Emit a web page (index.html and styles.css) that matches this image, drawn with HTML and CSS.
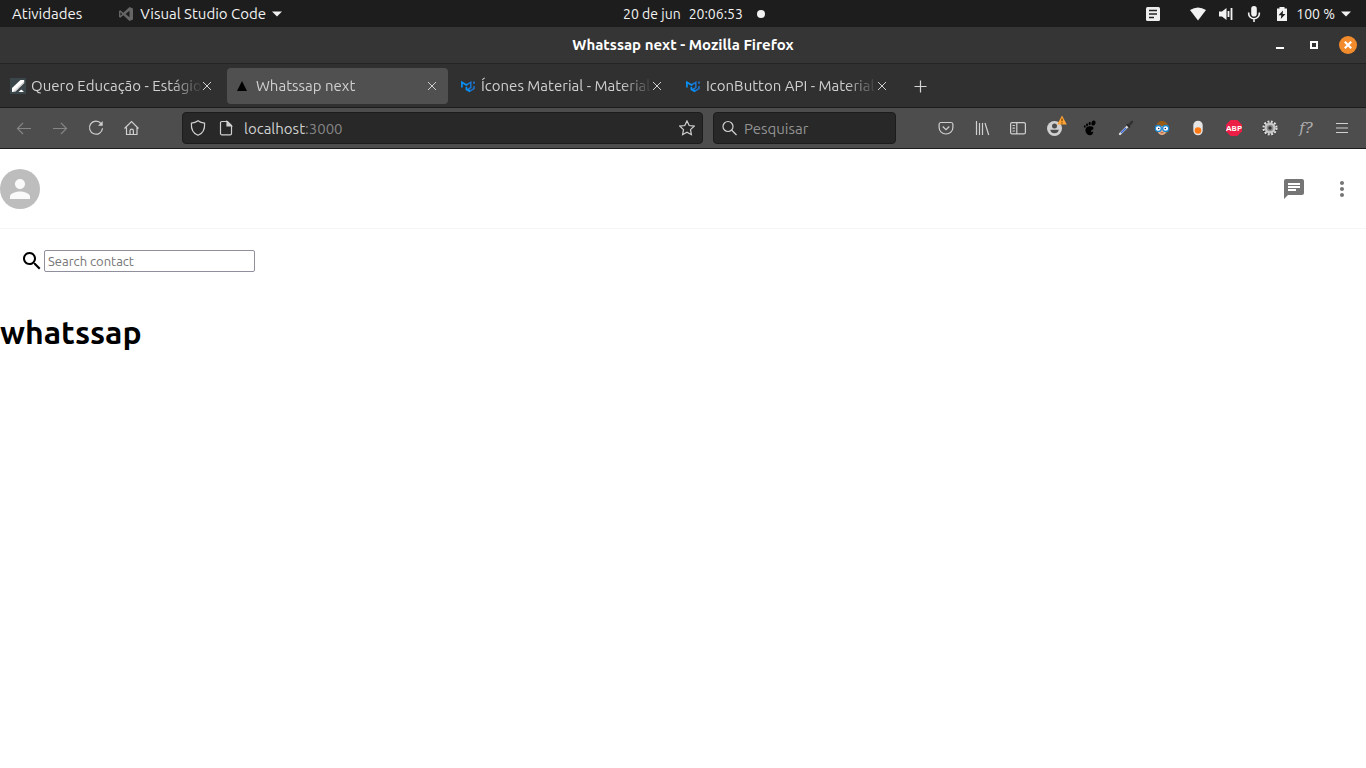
FILE: index.html
```html
<!DOCTYPE html>
<html lang="pt-BR">
<head>
<meta charset="utf-8">
<meta name="viewport" content="width=device-width, initial-scale=1">
<title>Whatssap next</title>
<link rel="stylesheet" href="styles.css">
</head>
<body>
<svg class="defs" aria-hidden="true">
  <symbol id="mui" viewBox="0 0 16 16">
    <path d="M7.800 6.100l3-1.700v5.200L7.800 11.300l2.400 1.500 3.800-2.200V8" fill="none" stroke="#1976d2" stroke-width="1.500"/>
    <path d="M1.900 9.500V4.300l4.500 2.600 1.400-.8M6.400 8.800v2.600l3.800 2" fill="none" stroke="#0a90f5" stroke-width="1.700"/>
    <path d="M13.200 3.500h1.700v2.200h-1.700z" fill="#1976d2"/>
  </symbol>
  <symbol id="cross" viewBox="0 0 16 16">
    <path d="M4 4l8 8M12 4l-8 8" fill="none" stroke="currentColor" stroke-width="1"/>
  </symbol>
</svg>

<header class="panel">
  <div class="panel-left">
    <button type="button" class="panel-item">Atividades</button>
    <button type="button" class="panel-item app-menu">
      <svg width="16" height="16" viewBox="0 0 16 16"><path d="M11.500 1L15 2.500v11L11.500 15 5.300 9.300 2.300 11.700 1 11V5l1.300-.7 3 2.400z" fill="#666"/><path d="M11.500 4.800L7.500 8l4 3.200zM2.400 6.300v3.400L4.200 8z" fill="#1d1d1d"/></svg>
      <span>Visual Studio Code</span>
      <svg width="10" height="6" viewBox="0 0 10 6"><path d="M0 .5h10L5 5.500z" fill="#f2f2f2"/></svg>
    </button>
  </div>
  <button type="button" class="panel-item clock"><span>20 de jun</span><span>20:06:53</span></button>
  <div class="panel-right">
    <span class="dot"></span>
    <div class="tray">
      <svg class="notes" width="16" height="16" viewBox="0 0 16 16"><rect x="1" y="1" width="14" height="14" rx="1.500" fill="#eee"/><path d="M4 4.500h8M4 8h8M4 11.500h5" stroke="#222" stroke-width="1.500"/></svg>
      <button type="button" class="panel-item status" aria-label="Sistema">
        <svg width="16" height="16" viewBox="0 0 16 16"><path d="M0 4Q8-1 16 4L8 14.500z" fill="#f2f2f2"/></svg>
        <svg width="16" height="16" viewBox="0 0 16 16"><path d="M1 5.500h3L8.500 2v12L4 10.500H1z" fill="#f2f2f2"/><path d="M10.500 5v6M13.500 2v12" stroke="#f2f2f2" stroke-width="1.800"/></svg>
        <svg width="16" height="16" viewBox="0 0 16 16"><rect x="5.200" y="0" width="5.600" height="10.500" rx="2.800" fill="#f2f2f2"/><path d="M2.700 6.500v1.200a5.300 5 0 0 0 10.600 0V6.500M8 13v3" fill="none" stroke="#f2f2f2" stroke-width="1.600"/></svg>
        <svg width="16" height="16" viewBox="0 0 16 16"><path d="M5.500 1h5v1.500H13V15H3V2.500h2.500z" fill="#f2f2f2"/><path d="M9 4.500L4.500 9.300h2.800L6.800 13l4.700-5H8.700z" fill="#1d1d1d"/></svg>
        <span>100 %</span>
        <svg width="10" height="6" viewBox="0 0 10 6"><path d="M0 .5h10L5 5.500z" fill="#f2f2f2"/></svg>
      </button>
    </div>
  </div>
</header>

<div class="titlebar">
  <div class="title">Whatssap next - Mozilla Firefox</div>
  <div class="window-controls">
    <button type="button" aria-label="Minimizar"><svg width="18" height="18" viewBox="0 0 18 18"><path d="M5 12h8" stroke="#fff" stroke-width="2"/></svg></button>
    <button type="button" aria-label="Maximizar"><svg width="18" height="18" viewBox="0 0 18 18"><rect x="6" y="6" width="6" height="6" fill="none" stroke="#fff" stroke-width="2"/></svg></button>
    <button type="button" aria-label="Fechar"><svg width="18" height="18" viewBox="0 0 18 18"><circle cx="9" cy="9" r="9" fill="#f28b2b"/><path d="M5.800 5.800l6.400 6.400M12.200 5.800l-6.400 6.400" stroke="#fff" stroke-width="2.200"/></svg></button>
  </div>
</div>

<nav class="tabs" aria-label="Abas">
  <div class="tab">
    <svg class="favicon" width="16" height="16" viewBox="0 0 16 16"><path d="M0 0h16v16H0z" fill="#3c474c"/><path d="M2 10L10.500 2h3.700v3L5.500 13.500 2 14z" fill="#fff"/><path d="M4 13.300L14.200 4" stroke="#bbb" stroke-width=".8"/><path d="M8.500 14l2.800-2.500L14 14z" fill="#fff"/></svg>
    <a class="tab-title" href="#quero">Quero Educação - Estágio</a>
    <button type="button" class="tab-close" aria-label="Fechar aba"><svg width="16" height="16"><use href="#cross"/></svg></button>
  </div>
  <div class="tab active">
    <svg class="favicon" width="16" height="16" viewBox="0 0 16 16"><path d="M2 13L7 3l5 10z" fill="#000"/></svg>
    <a class="tab-title" href="#whatssap">Whatssap next</a>
    <button type="button" class="tab-close" aria-label="Fechar aba"><svg width="16" height="16"><use href="#cross"/></svg></button>
  </div>
  <div class="tab">
    <svg class="favicon" width="16" height="16"><use href="#mui"/></svg>
    <a class="tab-title" href="#icones">Ícones Material - Material</a>
    <button type="button" class="tab-close" aria-label="Fechar aba"><svg width="16" height="16"><use href="#cross"/></svg></button>
  </div>
  <div class="tab">
    <svg class="favicon" width="16" height="16"><use href="#mui"/></svg>
    <a class="tab-title" href="#iconbutton">IconButton API - Material</a>
    <button type="button" class="tab-close" aria-label="Fechar aba"><svg width="16" height="16"><use href="#cross"/></svg></button>
  </div>
  <button type="button" class="tool new-tab" aria-label="Nova aba"><svg width="16" height="16" viewBox="0 0 16 16"><path d="M8.500 2.500v12M2.500 8.500h12" stroke="#d4d4d4" stroke-width="1.200"/></svg></button>
</nav>

<div class="toolbar">
  <div class="tools">
    <button type="button" class="tool" aria-label="Voltar" disabled><svg class="line" width="16" height="16" viewBox="0 0 16 16"><path d="M15 8.500H1.500M7 3L1.500 8.500 7 14"/></svg></button>
    <button type="button" class="tool" aria-label="Avançar" disabled><svg class="line" width="16" height="16" viewBox="0 0 16 16"><path d="M1 8.500h13.500M9 3l5.500 5.500L9 14"/></svg></button>
    <button type="button" class="tool" aria-label="Recarregar"><svg class="line" width="16" height="16" viewBox="0 0 16 16"><path d="M13 3.500a6.500 6.500 0 1 0 1.500 4.700"/><path d="M14.700 1v4.700H10z" fill="currentColor" stroke="none"/></svg></button>
    <button type="button" class="tool" aria-label="Início"><svg class="line" width="16" height="16" viewBox="0 0 16 16"><path d="M.5 8.500L7.500 1.500l7 7M2.500 7.500v7h10.500v-7M6 14.500v-3.700a1.700 1.700 0 0 1 3.400 0v3.700"/></svg></button>
  </div>
  <div class="field url">
    <svg class="line" width="16" height="16" viewBox="0 0 16 16"><path d="M8 .8c2 1.500 4.300 2.200 6.600 2.400C15 9 12.500 13.500 8 15.300 3.500 13.500 1 9 1.400 3.200 3.700 3 6 2.300 8 .8z"/></svg>
    <svg class="line page-icon" width="16" height="16" viewBox="0 0 16 16"><path d="M3.800 1.500H9.500L13.500 5.500v8a1.300 1.300 0 0 1-1.300 1.300H3.800a1.300 1.300 0 0 1-1.300-1.300v-10.700a1.300 1.300 0 0 1 1.300-1.300z"/><path d="M9 1.500V6h4.500z" fill="currentColor"/></svg>
    <a class="address" href="#localhost">localhost<span>:3000</span></a>
    <button type="button" class="star" aria-label="Favoritar"><svg class="line" width="16" height="16" viewBox="0 0 16 16"><path d="M8 .9l2.200 4.600 5 .6-3.700 3.500.9 5.100L8 12.200l-4.400 2.500.9-5.100L.8 6.100l5-.6z"/></svg></button>
  </div>
  <div class="field find">
    <svg class="line" width="16" height="16" viewBox="0 0 16 16"><circle cx="7" cy="6.500" r="5"/><path d="M10.500 10l5 5"/></svg>
    <input type="text" aria-label="Pesquisar" placeholder="Pesquisar">
  </div>
  <div class="tools extensions">
    <button type="button" class="tool" aria-label="Pocket"><svg class="line" width="16" height="16" viewBox="0 0 16 16"><path d="M2.800 2.500h10.400a1.800 1.800 0 0 1 1.700 1.800V7.500a6.900 6.500 0 0 1-13.800 0V4.300a1.800 1.800 0 0 1 1.700-1.800z"/><path d="M4.700 6.500L8 9.700l3.300-3.200"/></svg></button>
    <button type="button" class="tool" aria-label="Biblioteca"><svg class="line" width="16" height="16" viewBox="0 0 16 16"><path d="M2.500 1v14M5.500 3v12M8.500 3v12M11 3l3.700 12"/></svg></button>
    <button type="button" class="tool" aria-label="Painel lateral"><svg class="line" width="16" height="16" viewBox="0 0 16 16"><rect x=".6" y="2.600" width="14.800" height="11.300" rx="1.500"/><path d="M6.800 2.600v11.300M2.500 5.500h2.400M2.500 8.200h2.400M2.500 11h2.400"/></svg></button>
    <button type="button" class="tool account" aria-label="Conta"><svg width="16" height="16" viewBox="0 0 16 16"><circle cx="8.500" cy="8.500" r="7.500" fill="#d0d0d0"/><circle cx="8.500" cy="6" r="2.500" fill="#4d4d4d"/><path d="M4.200 9.700h8.600c-.5 2.300-2 3.600-4.300 3.600s-3.800-1.300-4.300-3.600z" fill="#4d4d4d"/></svg><svg class="warning" width="10" height="10" viewBox="0 0 10 10"><path d="M5 .5L9.800 9.500H.2z" fill="#ffa436"/><path d="M5 3.500v2.800M5 7.300v1.200" stroke="#704000" stroke-width="1.200"/></svg></button>
    <button type="button" class="tool" aria-label="GNOME"><svg width="16" height="16" viewBox="0 0 16 16"><ellipse cx="11.500" cy="3" rx="2" ry="2.600" transform="rotate(15 11.500 3)"/><ellipse cx="7.700" cy="3.500" rx="1.100" ry="1.700"/><ellipse cx="5" cy="4.700" rx="1" ry="1.500"/><ellipse cx="2.800" cy="6.500" rx=".9" ry="1.200"/><path d="M7.500 6.300c3-.5 4.600 1 3.800 2.600-.8 1.500-2.700 1.300-2.500 2.400.1.800 1.700.7 2.500.3-.1 2.200-1.500 3.900-3.600 3.700C4.500 15 3 11.500 3.600 9c.4-1.600 2-2.500 3.900-2.700z"/></svg></button>
    <button type="button" class="tool" aria-label="Conta-gotas"><svg width="16" height="16" viewBox="0 0 16 16"><path d="M2 14L9.500 6.500" stroke="#ddd" stroke-width="2.400" stroke-linecap="round"/><path d="M3 13L8 8" stroke="#3968db" stroke-width="1.500"/><path d="M10.500 5.500L14 2" stroke="#333" stroke-width="2.600" stroke-linecap="round"/><path d="M8.700 4.300l3.200 3.200" stroke="#292929" stroke-width="1.500"/></svg></button>
    <button type="button" class="tool" aria-label="Extensão de avatar"><svg width="16" height="16" viewBox="0 0 16 16"><path d="M2 6C3 2.500 5 1 8 1s6 2 6 6l-.5 6-2 .5-8-1z" fill="#9a5b14"/><path d="M3.500 6h9c1 5-1 9-4.500 9s-5.500-4-4.500-9z" fill="#f0b58a"/><circle cx="4.300" cy="8.500" r="3" fill="#fff" stroke="#1685d4" stroke-width="1.300"/><circle cx="11.700" cy="8.500" r="3" fill="#fff" stroke="#1685d4" stroke-width="1.300"/><circle cx="4.700" cy="8.500" r=".8" fill="#125"/><circle cx="11.300" cy="8.500" r=".8" fill="#125"/><path d="M6.500 12.800h3" stroke="#a84f35"/></svg></button>
    <button type="button" class="tool" aria-label="Alternar"><svg width="16" height="16" viewBox="0 0 16 16"><rect x="3.300" y=".7" width="9.400" height="14.600" rx="4.700" fill="#e4e4e4"/><circle cx="8" cy="10.500" r="3.300" fill="#ff7a14"/></svg></button>
    <button type="button" class="tool" aria-label="Adblock Plus"><svg width="16" height="16" viewBox="0 0 16 16"><path d="M4.700 0h6.600L16 4.700v6.600L11.300 16H4.700L0 11.300V4.700z" fill="#ed1e45"/><text class="abp" x="8" y="11" text-anchor="middle">ABP</text></svg></button>
    <button type="button" class="tool" aria-label="Ajustes"><svg width="16" height="16" viewBox="0 0 16 16"><circle cx="8" cy="8.500" r="6.600" fill="none" stroke="#222" stroke-width="2.200" stroke-dasharray="2 1.450"/><circle cx="8" cy="8" r="6.500" fill="none" stroke="#ddd" stroke-width="2.200" stroke-dasharray="2 1.400"/><circle cx="8" cy="8" r="4.400" fill="#8b8b8b" stroke="#c8c8c8" stroke-width="2.200"/><circle cx="8" cy="8" r="1.700" fill="#333"/></svg></button>
    <button type="button" class="tool whatfont" aria-label="WhatFont">f?</button>
    <button type="button" class="tool" aria-label="Menu"><svg class="line" width="16" height="16" viewBox="0 0 16 16"><path d="M2 3.500h12M2 8h12M2 12.500h12"/></svg></button>
  </div>
</div>

<main class="page">
  <div class="chat-header">
    <button type="button" class="avatar" aria-label="Perfil"><svg width="30" height="30" viewBox="0 0 24 24"><path d="M12 12c2.210 0 4-1.790 4-4s-1.790-4-4-4-4 1.790-4 4 1.790 4 4 4zm0 2c-2.670 0-8 1.340-8 4v2h16v-2c0-2.660-5.330-4-8-4z" fill="#fafafa"/></svg></button>
    <div class="chat-actions">
      <button type="button" aria-label="Conversas"><svg width="24" height="24" viewBox="0 0 24 24"><path d="M20 2H4c-1.100 0-1.990.9-1.990 2L2 22l4-4h14c1.100 0 2-.9 2-2V4c0-1.100-.9-2-2-2zM6 9h12v2H6V9zm8 5H6v-2h8v2zm4-6H6V6h12v2z" fill="#757575"/></svg></button>
      <button type="button" aria-label="Mais"><svg width="24" height="24" viewBox="0 0 24 24"><path d="M12 8c1.100 0 2-.9 2-2s-.9-2-2-2-2 .9-2 2 .9 2 2 2zm0 2c-1.100 0-2 .9-2 2s.9 2 2 2 2-.9 2-2-.9-2-2-2zm0 6c-1.100 0-2 .9-2 2s.9 2 2 2 2-.9 2-2-.9-2-2-2z" fill="#757575"/></svg></button>
    </div>
  </div>
  <label class="contact-search">
    <svg width="24" height="24" viewBox="0 0 24 24"><path d="M15.500 14h-.79l-.28-.27C15.410 12.590 16 11.110 16 9.500 16 5.910 13.090 3 9.500 3S3 5.910 3 9.500 5.910 16 9.500 16c1.610 0 3.090-.59 4.230-1.570l.27.28v.79l5 4.990L20.490 19l-4.990-5zm-6 0C7.010 14 5 11.990 5 9.500S7.010 5 9.500 5 14 7.010 14 9.500 11.990 14 9.500 14z"/></svg>
    <input type="text" aria-label="Search contact" placeholder="Search contact">
  </label>
  <h1>whatssap</h1>
</main>
</body>
</html>
```
FILE: styles.css
```css
* {
  box-sizing: border-box;
}

body {
  margin: 0;
  min-height: 100vh;
  display: flex;
  flex-direction: column;
  background: #fff;
  color: #000;
  font-family: Ubuntu, "Noto Sans", sans-serif;
  font-size: 15px;
}

button {
  margin: 0;
  padding: 0;
  border: 0;
  background: none;
  color: inherit;
  font: inherit;
}

a {
  color: inherit;
  text-decoration: none;
}

svg {
  display: block;
  flex: none;
}

.defs {
  position: absolute;
  width: 0;
  height: 0;
}

.line {
  fill: none;
  stroke: currentColor;
  stroke-width: 1.2;
}

/* Desktop panel */

.panel {
  display: grid;
  grid-template-columns: 1fr auto 1fr;
  align-items: center;
  height: 27px;
  background: #1d1d1d;
  color: #f2f2f2;
  line-height: 20px;
  white-space: nowrap;
}

.panel-left,
.panel-right,
.panel-item,
.tray {
  display: flex;
  align-items: center;
}

.panel-left {
  gap: 36px;
  padding-left: 12px;
}

.app-menu {
  gap: 6px;
}

.clock,
.status {
  font-size: 14px;
}

.clock {
  gap: 8px;
}

.panel-right {
  justify-content: space-between;
  padding: 0 15px 0 14px;
}

.dot {
  width: 8px;
  height: 8px;
  border-radius: 50%;
  background: #f2f2f2;
}

.tray {
  gap: 29px;
}

.status {
  gap: 12px;
}

.status span {
  margin: 0 -6px;
}

/* Window title */

.titlebar {
  display: grid;
  grid-template-columns: 1fr auto 1fr;
  align-items: center;
  height: 37px;
  background: #353535;
  border-bottom: 1px solid #242424;
  color: #fff;
}

.title {
  grid-column: 2;
  font-weight: 700;
  line-height: 22px;
}

.window-controls {
  display: flex;
  justify-content: flex-end;
  gap: 16px;
  padding-right: 9px;
}

/* Tabs */

.tabs {
  display: flex;
  align-items: center;
  gap: 4px;
  height: 44px;
  padding-left: 2px;
  background: #303030;
  border-bottom: 1px solid #1c1c1c;
  color: #d0d0d0;
}

.tab {
  display: flex;
  align-items: center;
  flex: 0 1 221px;
  min-width: 0;
  height: 36px;
  padding: 0 8px;
  border-radius: 4px;
}

.tab.active {
  background: #505050;
}

.favicon {
  margin-right: 5px;
}

.tab-title {
  flex: 1;
  min-width: 0;
  margin-right: -4px;
  overflow: hidden;
  line-height: 22px;
  white-space: nowrap;
  mask-image: linear-gradient(to left, transparent, #000 32px);
}

/* Navigation toolbar */

.toolbar {
  display: flex;
  align-items: center;
  height: 41px;
  padding: 0 6px;
  background: #4d4d4d;
  border-bottom: 1px solid #1c1c1c;
  color: #d0d0d0;
}

.tools {
  display: flex;
}

.tool {
  display: flex;
  align-items: center;
  justify-content: center;
  width: 36px;
  height: 32px;
}

.tool:disabled {
  color: #858585;
}

.field {
  display: flex;
  align-items: center;
  height: 32px;
  padding: 0 7px;
  background: #282828;
  border: 1px solid #1c1c1c;
  border-radius: 4px;
}

.url {
  flex: 1;
  margin: 0 10px 0 32px;
}

.page-icon {
  margin: 0 10px 0 12px;
}

.address {
  flex: 1;
}

.address span {
  color: #858585;
}

.find {
  flex: 0 1 183px;
  min-width: 0;
  gap: 7px;
}

.find input {
  flex: 1;
  min-width: 0;
  padding: 0;
  border: 0;
  outline: 0;
  background: none;
  color: inherit;
  font: inherit;
}

.find input::placeholder {
  color: #929292;
}

.extensions {
  margin-left: 32px;
}

.account {
  position: relative;
}

.warning {
  position: absolute;
  top: 3px;
  right: 5px;
}

.abp {
  fill: #fff;
  font: 700 8px Ubuntu, "Open Sans", sans-serif;
}

.whatfont {
  color: #b0b0b0;
  font: italic 15px "DejaVu Serif", serif;
}

/* Page */

.page {
  flex: 1;
}

.chat-header {
  display: flex;
  align-items: center;
  justify-content: space-between;
  height: 80px;
  border-bottom: 1px solid whitesmoke;
}

.avatar {
  display: flex;
  align-items: center;
  justify-content: center;
  width: 40px;
  height: 40px;
  border-radius: 50%;
  background: #bdbdbd;
}

.chat-actions {
  display: flex;
}

.chat-actions button {
  padding: 12px;
}

.contact-search {
  display: flex;
  align-items: center;
  padding: 20px;
}

.contact-search input {
  width: 211px;
  height: 22px;
  padding: 0 3px;
  border: 1px solid #8f8f9d;
  border-radius: 2px;
  font: 13px Ubuntu, "Noto Sans", sans-serif;
}

.contact-search input::placeholder {
  color: #757575;
}

h1 {
  margin: 20px 0;
  font-size: 32px;
  line-height: 38px;
}
```
